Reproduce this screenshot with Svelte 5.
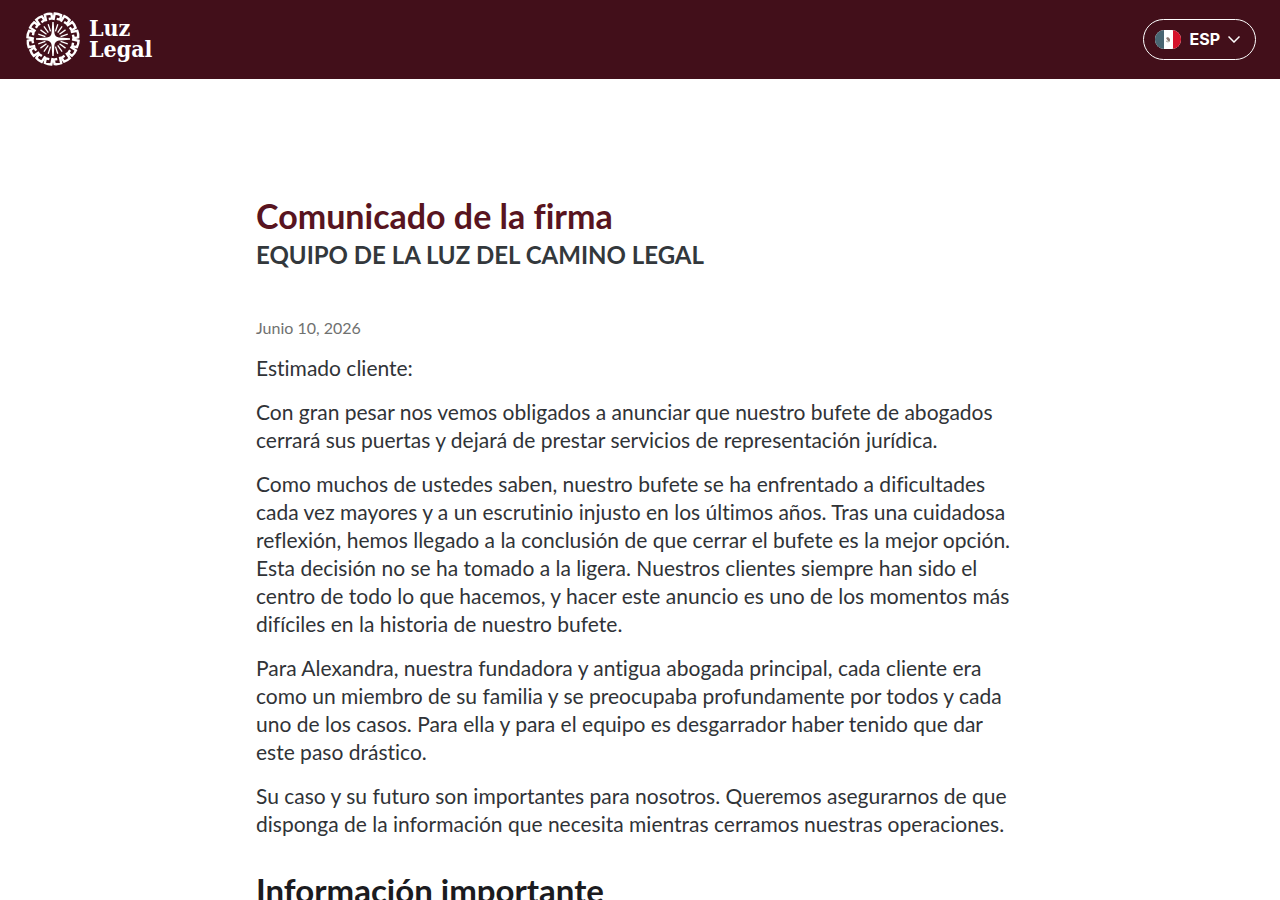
<script lang="ts">
  let language = $state('ESP');

  // Key pattern blocks round the emblem, and the rays inside it
  const blocks = Array.from({ length: 16 }, (_, i) => i * 22.5 + 11);
  const rays = Array.from({ length: 20 }, (_, i) => i * 18).filter((a) => a % 90 !== 0);

  const paragraphs = [
    'Estimado cliente:',
    'Con gran pesar nos vemos obligados a anunciar que nuestro bufete de abogados cerrará sus puertas y dejará de prestar servicios de representación jurídica.',
    'Como muchos de ustedes saben, nuestro bufete se ha enfrentado a dificultades cada vez mayores y a un escrutinio injusto en los últimos años. Tras una cuidadosa reflexión, hemos llegado a la conclusión de que cerrar el bufete es la mejor opción. Esta decisión no se ha tomado a la ligera. Nuestros clientes siempre han sido el centro de todo lo que hacemos, y hacer este anuncio es uno de los momentos más difíciles en la historia de nuestro bufete.',
    'Para Alexandra, nuestra fundadora y antigua abogada principal, cada cliente era como un miembro de su familia y se preocupaba profundamente por todos y cada uno de los casos. Para ella y para el equipo es desgarrador haber tenido que dar este paso drástico.',
    'Su caso y su futuro son importantes para nosotros. Queremos asegurarnos de que disponga de la información que necesita mientras cerramos nuestras operaciones.',
  ];
</script>

<header class="site-header">
  <a class="logo" href="/">
    <svg class="emblem" viewBox="-27 -27 54 54" aria-hidden="true">
      {#each blocks as angle}
        <path
          class="key"
          transform="rotate({angle})"
          d="M-3.2 -18.8V-25.4Q0 -26 3.4 -25V-20.4H-.2"
        />
      {/each}
      {#each rays as angle}
        <path class="ray" transform="rotate({angle})" d="M0 -8V-15.5" />
      {/each}
      <path
        class="star"
        d="M-.7 -17H.7L1.4 -6Q2 -2 6 -1.4L17 -.7V.7L6 1.4Q2 2 1.4 6L.7 17H-.7L-1.4 6Q-2 2 -6 1.4L-17 .7V-.7L-6 -1.4Q-2 -2 -1.4 -6Z"
      />
      <circle class="star" r="3.2" />
    </svg>
    <span class="wordmark">Luz<br />Legal</span>
  </a>

  <button class="language-button" type="button" aria-haspopup="listbox">
    <svg class="flag" viewBox="0 0 26 20" aria-hidden="true">
      <defs>
        <clipPath id="flag-shape"><rect y="1" width="26" height="19" rx="9" /></clipPath>
      </defs>
      <g clip-path="url(#flag-shape)">
        <rect width="26" height="20" fill="#fff" />
        <rect width="9" height="20" fill="#496672" />
        <rect x="18" width="8" height="20" fill="#d5132b" />
      </g>
      <path d="M11 9l2-1 2 2v2h-2z" fill="#8b7770" />
      <path d="M11 12q2 2 4 0" fill="none" stroke="#a9aaa2" />
    </svg>
    <span>{language}</span>
    <svg class="chevron" viewBox="0 0 12 8" aria-hidden="true">
      <path d="M.5 1.5l5.5 5.5 5.5-5.5" />
    </svg>
  </button>
</header>

<main class="statement">
  <h1>Comunicado de la firma</h1>
  <p class="team">EQUIPO DE LA LUZ DEL CAMINO LEGAL</p>
  <p class="date">Junio 10, 2026</p>

  {#each paragraphs as text}
    <p>{text}</p>
  {/each}

  <h2>Información importante</h2>
</main>

<style>
  :global(body) {
    background: #fff;
    overflow-x: hidden;
  }

  .site-header {
    display: flex;
    align-items: center;
    justify-content: space-between;
    padding: 12px 24px 13px;
    background: #420f1a;
    color: #fff;
  }

  .logo {
    display: flex;
    align-items: center;
    gap: 9px;
    padding-left: 2px;
    color: #fff;
    text-decoration: none;
  }

  .emblem {
    width: 54px;
    height: 54px;
  }

  .key {
    fill: none;
    stroke: #fff;
    stroke-width: 2.4;
  }

  .ray {
    stroke: #fff;
    stroke-width: 1.3;
  }

  .star {
    fill: #fff;
  }

  .wordmark {
    padding-bottom: 2px;
    font: bold 23px/21px 'DejaVu Serif Condensed', 'DejaVu Serif', serif;
  }

  .language-button {
    display: flex;
    align-items: center;
    gap: 8px;
    height: 41px;
    padding: 0 15px 0 11px;
    border: 1px solid #fff;
    border-radius: 21px;
    background: transparent;
    color: #fff;
    font: 700 16px/24px Inter, sans-serif;
    cursor: pointer;
  }

  .flag {
    width: 26px;
    height: 20px;
  }

  .chevron {
    width: 12px;
    height: 8px;
    fill: none;
    stroke: #fff;
    stroke-width: 1.5;
  }

  .statement {
    max-width: 768px;
    margin: 0 auto;
    padding: 117px 24px 80px;
    color: #303337;
    font-family: Lato, sans-serif;
    font-variant-ligatures: none;
  }

  h1 {
    margin: 0;
    color: #581420;
    font-size: 34px;
    font-weight: 700;
    line-height: 40px;
  }

  h2 {
    margin: 32px 0 16px;
    color: #1b1b20;
    font-size: 33px;
    font-weight: 700;
    line-height: 40px;
  }

  p {
    margin: 0 0 16px;
    font-size: 21px;
    line-height: 28px;
  }

  .team {
    margin-bottom: 42px;
    color: #33383c;
    font-size: 24px;
    font-weight: 700;
    line-height: 38px;
  }

  .date {
    margin-bottom: 14px;
    color: #707170;
    font-size: 16px;
    line-height: 24px;
  }
</style>
